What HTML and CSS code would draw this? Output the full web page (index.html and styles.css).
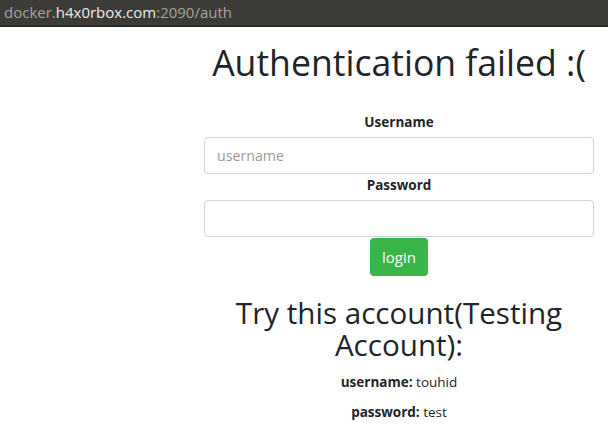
FILE: index.html
```html
<!DOCTYPE html>
<html>
<head>
<meta charset="utf-8">
<link rel="stylesheet" href="styles.css">
</head>
<body>
<div class="urlbar"><span class="dim">docker.</span><span class="host">h4x0rbox.com</span><span class="dim">:2090/auth</span></div>
<main class="page">
  <div class="spacer"></div>
  <section class="panel">
    <h1 class="title">Authentication failed :(</h1>
    <form class="login">
      <label class="field-label">Username</label>
      <input class="field" type="text" placeholder="username">
      <label class="field-label">Password</label>
      <input class="field" type="password">
      <button class="btn-login" type="button">login</button>
    </form>
    <h2 class="subtitle">Try this account(Testing Account):</h2>
    <p class="cred"><b>username:</b> touhid</p>
    <p class="cred"><b>password:</b> test</p>
  </section>
</main>
</body>
</html>
```

FILE: styles.css
```css
* { box-sizing: border-box; }
html, body { margin: 0; padding: 0; background: #fff; }
body {
  font-family: "Open Sans", "Noto Sans", sans-serif;
  color: #212529;
}
.urlbar {
  height: 27px;
  background: #3c3b37;
  border-bottom: 2px solid #2a2a28;
  padding-left: 4px;
  font-size: 15px;
  line-height: 24px;
  white-space: nowrap;
}
.urlbar .dim { color: #a3a3a0; }
.urlbar .host { color: #ececec; }
.page {
  display: grid;
  grid-template-columns: 204px 390px;
}
.panel {
  display: flex;
  flex-direction: column;
  align-items: center;
  text-align: center;
}
.title {
  margin: 14px 0 0;
  font-size: 35.6px;
  font-weight: 400;
  line-height: 43px;
  white-space: nowrap;
}
.login {
  width: 100%;
  display: flex;
  flex-direction: column;
  align-items: center;
  margin-top: 27px;
}
.field-label {
  font-size: 13.5px;
  font-weight: 700;
  line-height: 22px;
  padding-bottom: 4px;
}
.field {
  width: 100%;
  height: 37px;
  border: 1px solid #ced4da;
  border-radius: 4px;
  padding: 0 12px;
  font-family: inherit;
  font-size: 14.2px;
  color: #495057;
}
.field::placeholder { color: #9a9a9a; }
.btn-login {
  margin-top: 1px;
  height: 38px;
  padding: 0 12px;
  border: none;
  border-radius: 4px;
  background: #39b54a;
  color: #fff;
  font-family: inherit;
  font-size: 15px;
}
.subtitle {
  margin: 21px 0 0;
  font-size: 29.6px;
  font-weight: 400;
  line-height: 32px;
}
.cred {
  margin: 11px 0 0;
  font-size: 13.5px;
  line-height: 20px;
}
.cred + .cred { margin-top: 10px; }
.cred b { font-weight: 700; }
```
